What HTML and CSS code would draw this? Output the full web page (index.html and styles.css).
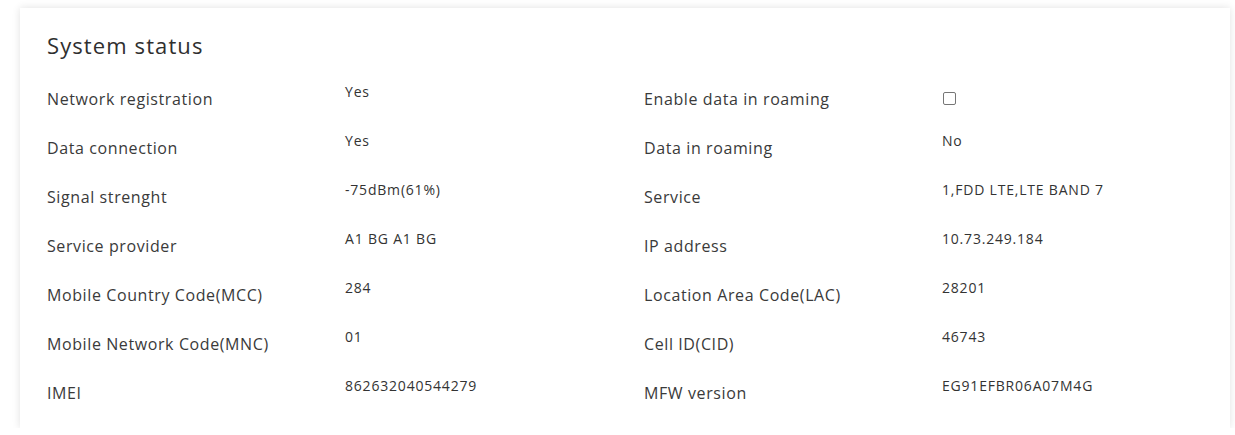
FILE: index.html
```html
<!DOCTYPE html>
<html lang="en">
<head>
<meta charset="utf-8">
<title>System status</title>
<link rel="stylesheet" href="styles.css">
</head>
<body>
<section class="card">
  <h2 class="title">System status</h2>
  <div class="grid">
    <div class="label">Network registration</div>
    <div class="value">Yes</div>
    <div class="label">Enable data in roaming</div>
    <div class="value check-cell"><span class="checkbox"></span></div>

    <div class="label">Data connection</div>
    <div class="value">Yes</div>
    <div class="label">Data in roaming</div>
    <div class="value">No</div>

    <div class="label">Signal strenght</div>
    <div class="value">-75dBm(61%)</div>
    <div class="label">Service</div>
    <div class="value">1,FDD LTE,LTE BAND 7</div>

    <div class="label">Service provider</div>
    <div class="value">A1 BG A1 BG</div>
    <div class="label">IP address</div>
    <div class="value">10.73.249.184</div>

    <div class="label">Mobile Country Code(MCC)</div>
    <div class="value">284</div>
    <div class="label">Location Area Code(LAC)</div>
    <div class="value">28201</div>

    <div class="label">Mobile Network Code(MNC)</div>
    <div class="value">01</div>
    <div class="label">Cell ID(CID)</div>
    <div class="value">46743</div>

    <div class="label">IMEI</div>
    <div class="value">862632040544279</div>
    <div class="label">MFW version</div>
    <div class="value">EG91EFBR06A07M4G</div>
  </div>
</section>
</body>
</html>
```
FILE: styles.css
```css
html, body {
  margin: 0;
  padding: 0;
  background: #ffffff;
}
body {
  font-family: "Open Sans", "DejaVu Sans", sans-serif;
  color: #333333;
}
.card {
  margin: 8px 5px 0 20px;
  width: 1210px;
  height: 420px;
  box-sizing: border-box;
  padding: 22px 27px 10px 27px;
  background: #ffffff;
  box-shadow: 0 0 8px rgba(0, 0, 0, 0.12);
}
.title {
  margin: 0;
  font-size: 22px;
  font-weight: 400;
  line-height: 30px;
  letter-spacing: 1.1px;
  color: #2f2f2f;
}
.grid {
  margin-top: 14px;
  display: grid;
  grid-template-columns: 298px 299px 298px 1fr;
  grid-auto-rows: 49px;
}
.label {
  font-size: 16px;
  line-height: 24px;
  letter-spacing: 0.6px;
  align-self: center;
  color: #3a3a3a;
}
.value {
  font-size: 14px;
  line-height: 20px;
  letter-spacing: 0.8px;
  padding-top: 8px;
  color: #333333;
}
.check-cell {
  padding-top: 0;
  align-self: center;
  display: flex;
  align-items: center;
}
.checkbox {
  display: inline-block;
  width: 13px;
  height: 13px;
  box-sizing: border-box;
  border: 1px solid #767676;
  border-radius: 2px;
  background: #fff;
  margin-left: 1px;
}
```
